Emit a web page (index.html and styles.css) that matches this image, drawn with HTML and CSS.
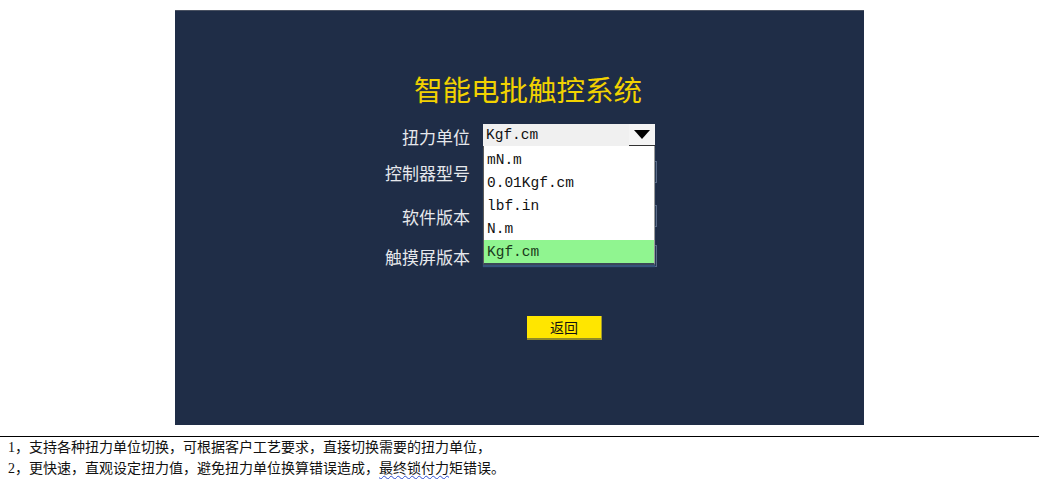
FILE: index.html
```html
<!DOCTYPE html>
<html lang="zh-CN">
<head>
<meta charset="utf-8">
<title>智能电批触控系统</title>
<link rel="stylesheet" href="styles.css">
</head>
<body>
<div class="panel">
  <h1 class="title">智能电批触控系统</h1>
  <div class="form">
    <div class="row row-1">
      <div class="label">扭力单位</div>
      <div class="select">
        <div class="select-value">Kgf.cm</div>
        <div class="select-btn">
          <svg width="16" height="9" viewBox="0 0 16 9"><polygon points="0,0 16,0 8,9" fill="#000"/></svg>
        </div>
        <ul class="options">
          <li>mN.m</li>
          <li>0.01Kgf.cm</li>
          <li>lbf.in</li>
          <li>N.m</li>
          <li class="active">Kgf.cm</li>
        </ul>
      </div>
    </div>
    <div class="row row-2">
      <div class="label">控制器型号</div>
      <div class="field"></div>
    </div>
    <div class="row row-3">
      <div class="label">软件版本</div>
      <div class="field"></div>
    </div>
    <div class="row row-4">
      <div class="label">触摸屏版本</div>
      <div class="field"></div>
    </div>
  </div>
  <div class="actions">
    <button class="btn-back">返回</button>
  </div>
</div>
<div class="notes">
  <p>1，支持各种扭力单位切换，可根据客户工艺要求，直接切换需要的扭力单位，</p>
  <p>2，更快速，直观设定扭力值，避免扭力单位换算错误造成，<span class="spell">最终锁付力</span>矩错误。</p>
</div>
</body>
</html>
```

FILE: styles.css
```css
* { box-sizing: border-box; }
html, body { margin: 0; padding: 0; background: #fff; }
body { padding-top: 10px; font-family: "Noto Sans CJK SC", sans-serif; }

.panel {
  margin-left: 175px;
  width: 689px;
  height: 415px;
  background: #1f2d47;
  border-top: 1px solid #4a5262;
  padding-top: 60px;
}
.title {
  margin: 0;
  padding-left: 17px;
  text-align: center;
  color: #f2d200;
  font-size: 28.5px;
  font-weight: normal;
  line-height: 36px;
}
.form {
  margin-top: 17px;
  display: flex;
  flex-direction: column;
}
.row {
  display: flex;
  align-items: flex-start;
  height: 26px;
}
.row-2 { margin-top: 10px; }
.row-3 { margin-top: 18px; }
.row-4 { margin-top: 14px; }
.label {
  width: 295px;
  text-align: right;
  color: #e6e8ec;
  font-size: 17px;
  line-height: 26px;
}
.select, .field {
  margin-left: 13px;
  width: 174px;
  height: 22px;
}
.field {
  margin-top: 1px;
  border: 1px solid #5a6a86;
  background: #24344f;
}
.select {
  position: relative;
  width: 172px;
  display: flex;
  background: #f0f0f0;
  z-index: 2;
}
.select-value {
  flex: 1;
  font-family: "Liberation Mono", "Noto Sans CJK SC", monospace;
  font-size: 14.5px;
  line-height: 22px;
  padding-left: 3px;
  color: #111;
}
.select-btn {
  width: 26px;
  height: 22px;
  display: flex;
  align-items: center;
  justify-content: center;
  border-bottom: 1px solid #333;
  background: #f4f4f4;
}
.options {
  position: absolute;
  left: 0;
  top: 22px;
  width: 172px;
  margin: 0;
  padding: 2px 0 0 0;
  list-style: none;
  background: #fff;
  border-left: 1px solid #5b5b5b;
  border-right: 1px solid #9a9a9a;
  border-bottom: 2px solid #3a4658;
  box-shadow: 0 2px 1px #35527a;
}
.options li {
  height: 23px;
  line-height: 24px;
  padding-left: 3px;
  font-family: "Liberation Mono", "Noto Sans CJK SC", monospace;
  font-size: 14.5px;
  color: #111;
}
.options li.active { background: #90f590; color: #1a3a1a; }

.actions {
  margin-top: 46px;
  display: flex;
  padding-left: 352px;
}
.btn-back {
  width: 75px;
  height: 24px;
  background: #ffe600;
  border: none;
  border-bottom: 2px solid #8f8a2a;
  border-right: 1px solid #a09a30;
  font-family: "Noto Sans CJK SC", sans-serif;
  font-size: 14px;
  line-height: 20px;
  color: #111;
  padding: 0;
}

.notes {
  margin-top: 11px;
  border-top: 1px solid #000;
  padding-left: 8px;
}
.notes p {
  margin: 0;
  font-family: "Liberation Serif", "Noto Sans CJK SC", serif;
  font-size: 14px;
  line-height: 21px;
  color: #111;
}
.spell {
  text-decoration: underline wavy #3050d0;
  text-decoration-thickness: 1px;
  text-underline-offset: 2px;
}
```
